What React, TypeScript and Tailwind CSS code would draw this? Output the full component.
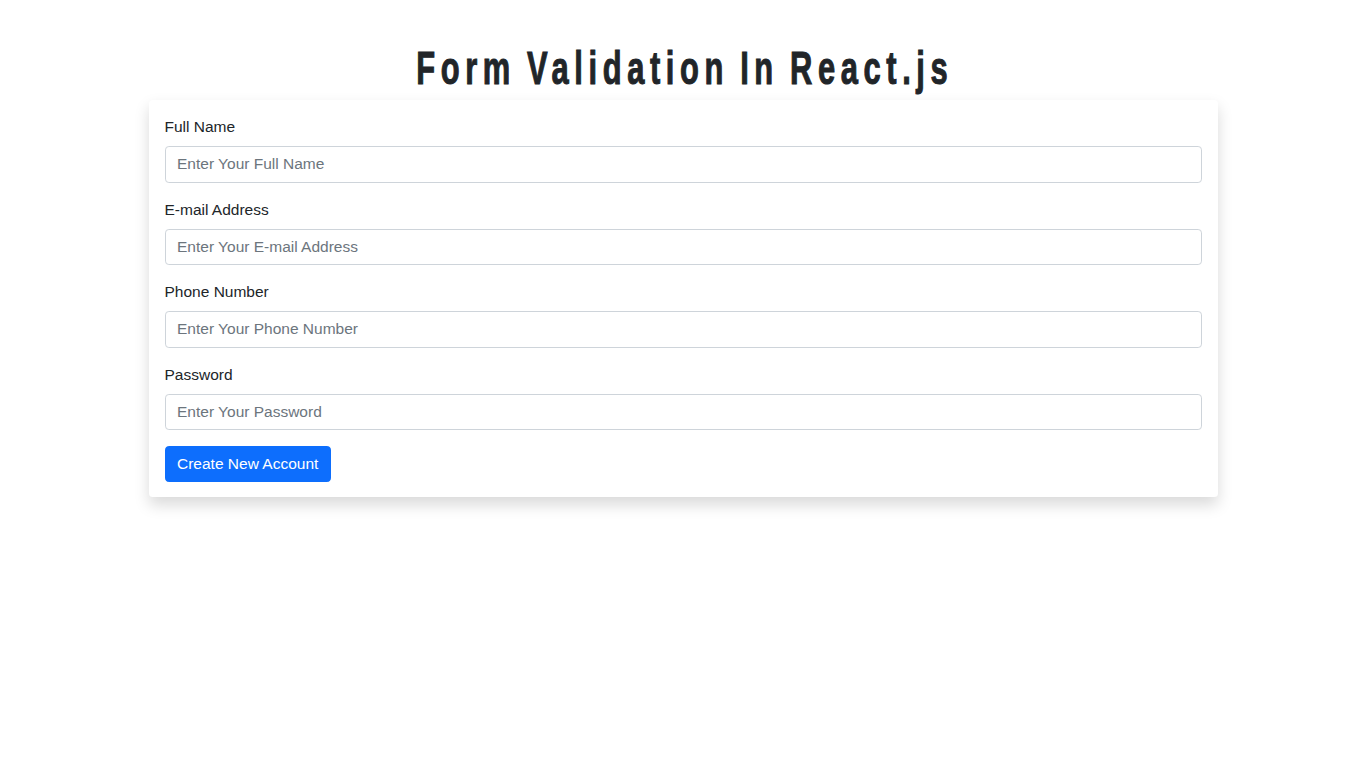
import React from "react";

const fields = [
  { label: "Full Name", placeholder: "Enter Your Full Name", type: "text" },
  { label: "E-mail Address", placeholder: "Enter Your E-mail Address", type: "email" },
  { label: "Phone Number", placeholder: "Enter Your Phone Number", type: "tel" },
  { label: "Password", placeholder: "Enter Your Password", type: "password" },
];

export default function App() {
  return (
    <div className="min-h-screen bg-white font-['Liberation_Sans',Arial,sans-serif] text-[#212529]">
      <div className="pt-[57.7px]">
        <h1 className="h-[31px] text-center text-[30.9px] font-bold leading-[31px] tracking-[5.6px] [word-spacing:-3px] pl-[3.6px] text-[#212529] [-webkit-text-stroke:0.7px_#212529] scale-y-[1.5] origin-[50%_26.26px]">
          Form Validation In React.js
        </h1>
      </div>
      <div className="mx-auto mt-[11.3px] w-[1069px] rounded-[3.84px] bg-white px-[16px] py-[15.36px] shadow-[0_7.68px_15.36px_rgba(0,0,0,0.15)]">
        <form onSubmit={(e) => e.preventDefault()}>
          {fields.map((f) => (
            <div key={f.label} className="mb-[15.36px]">
              <label className="mb-[7.68px] block text-[15.5px] leading-[23.04px] text-[#212529]">
                {f.label}
              </label>
              <input
                type={f.type}
                placeholder={f.placeholder}
                className="block h-[36.48px] w-full rounded-[3.84px] border border-[#ced4da] bg-white px-[11.52px] text-[15.5px] leading-[23.04px] text-[#212529] outline-none placeholder:text-[#6c757d]"
              />
            </div>
          ))}
          <button
            type="submit"
            className="h-[36.48px] rounded-[3.84px] border border-[#0d6efd] bg-[#0d6efd] px-[11.52px] text-[15.5px] leading-[23.04px] text-white"
          >
            Create New Account
          </button>
        </form>
      </div>
    </div>
  );
}
